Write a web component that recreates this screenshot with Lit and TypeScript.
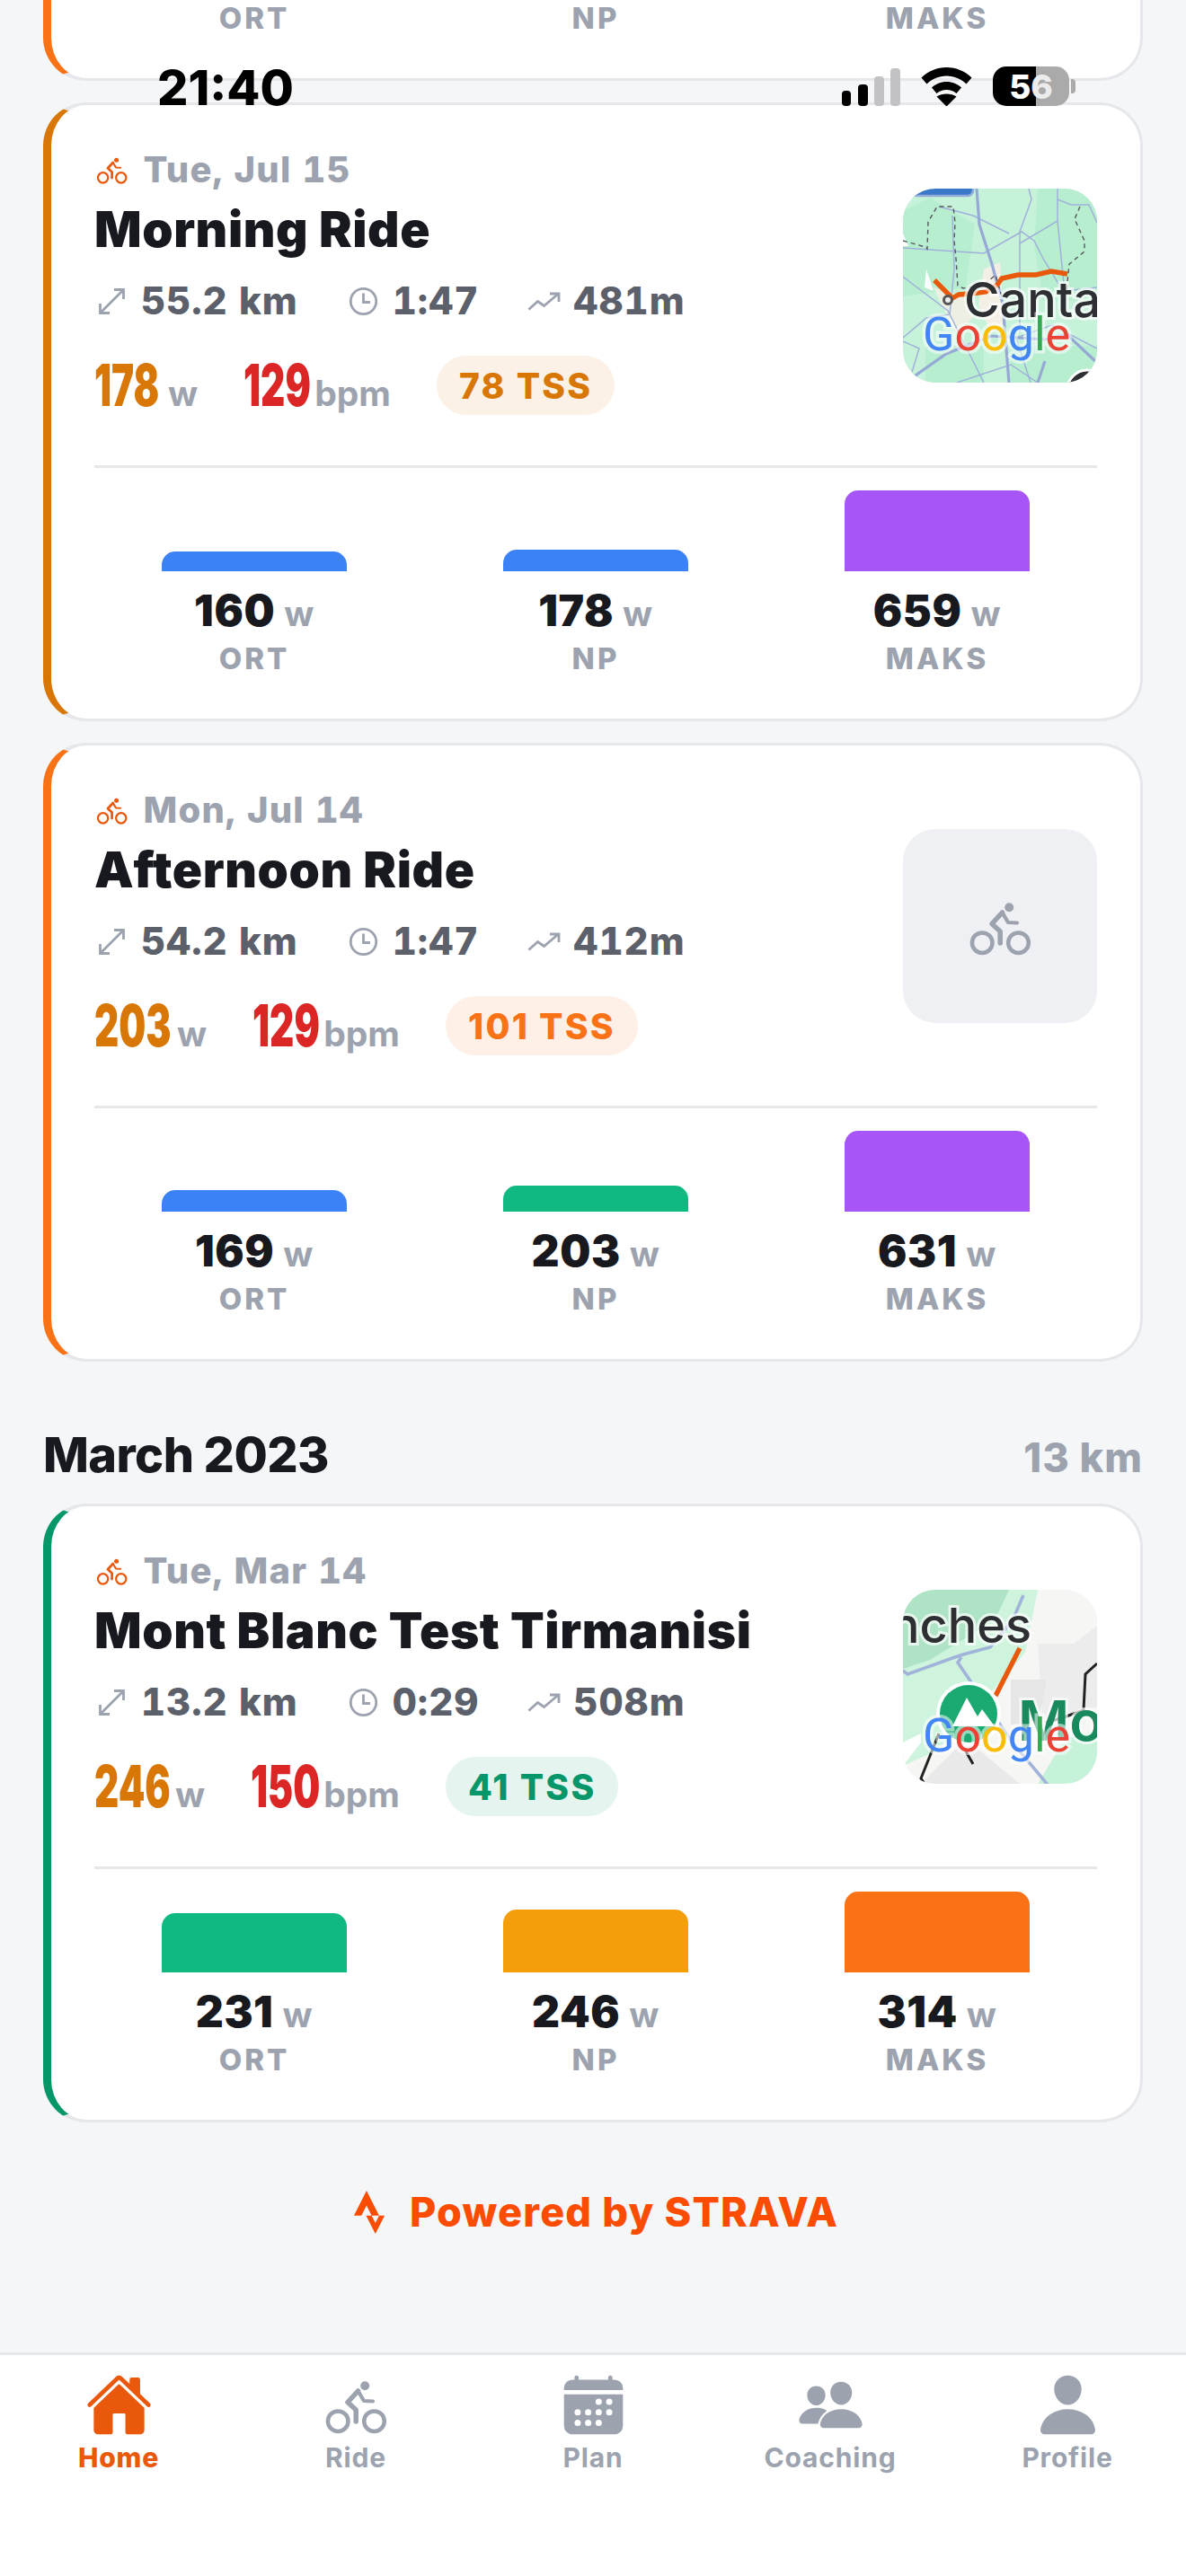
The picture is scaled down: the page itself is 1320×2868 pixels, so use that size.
import { LitElement, html, css, svg } from "lit";
import { customElement } from "lit/decorators.js";

const ION = {
  home: svg`<path d="M261.56 101.28a8 8 0 00-11.06 0L66.4 277.15a8 8 0 00-2.47 5.79L63.9 448a32 32 0 0032 32H192a16 16 0 0016-16V328a8 8 0 018-8h80a8 8 0 018 8v136a16 16 0 0016 16h96.06a32 32 0 0032-32V282.94a8 8 0 00-2.47-5.79z"/><path d="M490.91 244.15l-74.8-71.56V64a16 16 0 00-16-16h-48a16 16 0 00-16 16v32l-57.92-55.38C272.77 35.14 264.71 32 256 32c-8.68 0-16.72 3.14-22.14 8.63l-212.7 203.5c-6.22 6-7 15.87-1.34 22.37A16 16 0 0043 267.56L250.5 69.28a8 8 0 0111.06 0l207.52 198.28a16 16 0 0022.59-.44c6.14-6.36 5.63-16.86-.76-22.97z"/>`,
  calendar: svg`<path d="M480 128a64 64 0 00-64-64h-16V48.45c0-8.61-6.62-16-15.23-16.43A16 16 0 00368 48v16H144V48.45c0-8.61-6.62-16-15.23-16.43A16 16 0 00112 48v16H96a64 64 0 00-64 64v12a4 4 0 004 4h440a4 4 0 004-4zM32 416a64 64 0 0064 64h320a64 64 0 0064-64V179a3 3 0 00-3-3H35a3 3 0 00-3 3zm344-208a24 24 0 11-24 24 24 24 0 0124-24zm0 80a24 24 0 11-24 24 24 24 0 0124-24zm-80-80a24 24 0 11-24 24 24 24 0 0124-24zm0 80a24 24 0 11-24 24 24 24 0 0124-24zm0 80a24 24 0 11-24 24 24 24 0 0124-24zm-80-80a24 24 0 11-24 24 24 24 0 0124-24zm0 80a24 24 0 11-24 24 24 24 0 0124-24zm-80-80a24 24 0 11-24 24 24 24 0 0124-24zm0 80a24 24 0 11-24 24 24 24 0 0124-24z"/>`,
  people: svg`<path d="M336 256c-20.56 0-40.44-9.18-56-25.84-15.13-16.25-24.37-37.92-26-61-1.74-24.62 5.77-47.26 21.14-63.76S312 80 336 80c23.83 0 45.38 9.06 60.7 25.52 15.47 16.62 23 39.22 21.26 63.63-1.67 23.11-10.9 44.77-26 61C376.44 246.82 356.57 256 336 256zM467.83 432H204.18a27.71 27.71 0 01-22-10.67 30.22 30.22 0 01-5.26-25.79c8.42-33.81 29.28-61.85 60.32-81.08C264.79 297.4 299.86 288 336 288c36.85 0 71 9 98.71 26.05 31.11 19.13 52 47.33 60.38 81.55a30.27 30.27 0 01-5.32 25.76A27.68 27.68 0 01467.83 432zM147 260c-35.19 0-66.13-32.72-69-72.93-1.42-20.6 5-39.65 18-53.62 12.86-13.83 31-21.45 51-21.45s38 7.66 50.93 21.57c13.1 14.08 19.5 33.09 18 53.52-2.87 40.2-33.8 72.91-68.93 72.91zM212.66 291.45c-17.59-8.6-40.42-12.9-65.65-12.9-29.46 0-58.07 7.68-80.57 21.62-25.51 15.83-42.67 38.88-49.6 66.71a27.39 27.39 0 005.36 23.65A25.62 25.62 0 0043.33 400h111a8 8 0 007.87-6.57c.11-.63.25-1.26.41-1.88 8.48-34.06 28.35-62.84 57.71-83.82a8 8 0 00-.63-13.39c-1.57-.92-3.37-1.89-6.03-2.89z"/>`,
  person: svg`<path d="M332.64 64.58C313.18 43.57 286 32 256 32c-30.16 0-57.43 11.5-76.8 32.38-19.58 21.11-29.12 49.8-26.88 80.78C156.76 206.28 203.27 256 256 256s99.16-49.71 103.67-110.82c2.27-30.7-7.33-59.33-27.03-80.6zM432 480H80a31 31 0 01-24.2-11.13c-6.5-7.77-9.12-18.38-7.18-29.11C57.06 392.94 83.4 353.61 124.8 326c36.78-24.51 83.37-38 131.2-38s94.42 13.5 131.2 38c41.4 27.6 67.74 66.93 76.18 113.75 1.94 10.73-.68 21.34-7.18 29.11A31 31 0 01432 480z"/>`,
};

/* Rider icon: thin wheels, round joints; viewBox is a 75-unit square centred on the drawing. */
const rider = () => html`<svg class="rider" viewBox="35.5 12 75 75">
  <circle class="wheel" cx="52.7" cy="67.7" r="11.3"/><circle class="wheel" cx="93" cy="67.7" r="11.3"/>
  <circle class="skull" cx="82.7" cy="28.3" r="5"/>
  <path class="limb torso" d="M75 34L63.500 46.500L72.700 55V68"/>
  <path class="limb arm" d="M75 34L81.500 45L91.500 45.500"/>
</svg>`;

const googleWord = svg`<text class="google" x="22" y="180"><tspan fill="#4285f4">G</tspan><tspan fill="#ea4335">o</tspan><tspan fill="#fbbc05">o</tspan><tspan fill="#4285f4">g</tspan><tspan fill="#34a853">l</tspan><tspan fill="#ea4335">e</tspan></text>`;

const mapOne = html`<svg class="map" viewBox="0 0 216 216">
  <rect width="216" height="216" fill="#c6f2da"/>
  <path d="M0 25l30-15 50 30-10 70-70 10zM150 0h66v125h-60l-10-60zM120 175h96v41h-96zM25 175h65v41H25z" fill="#b8eed0"/>
  <path d="M90 90l18-8 4 70-14 8-14-30z" fill="#f4efe4"/>
  <path d="M34 110l24 50 20-16-10-24z" fill="#f4efe4" opacity=".85"/>
  <path d="M26 90l8 24-10-4zM0 50l6 14H0z" fill="#fff"/>
  <g fill="none" stroke="#9fb1da" stroke-width="1.5">
    <path d="M0 66l90 6 42-24 14 10 10 20 22 36 38-4"/><path d="M0 98l50 38 40 80"/><path d="M130 48V160"/>
    <path d="M140 0l3 12-13 36"/><path d="M172 0v36l-42 25"/><path d="M172 12l15 6h20l9 20"/>
    <path d="M172 36l8 80"/><path d="M0 170l18 8-8 26"/><path d="M216 178l-50-26-40 14 16 50"/>
    <path d="M60 216l60-20 30 20"/><path d="M40 20l38 10 40 20"/><path d="M55 30l2 60-5 50-26 4-26 22"/>
  </g>
  <path d="M82 0l3 40 14 44 12 44 7 88M12 216l2-8 34-24 50-20 60 4 24-6 32 30M150 216l8-24" fill="none" stroke="#96a9d5" stroke-width="3.2"/>
  <rect x="8" y="-12" width="70" height="20" rx="6" fill="#3a78c9" stroke="#93abd8" stroke-width="2.5"/>
  <g fill="none" stroke="#55595f" stroke-width="1.4" stroke-dasharray="5 4">
    <path d="M0 58l25 7 2 2 1-30 10-17h18l2 18-1 20 2 20 2 30 6 3 22-3 14-12 8 28"/>
    <path d="M197 20l-6 14 11 24 0 12-17 14-3 30"/>
  </g>
  <path d="M35 102l15 15 5 5 7-4 13-1 17-2 13-8 5-7 18-4 20 0 17-4 18 3" fill="none" stroke="#e8590c" stroke-width="5.4"/>
  <circle cx="50" cy="124" r="4.500" fill="#eee" stroke="#555" stroke-width="3"/>
  <text class="place" x="68" y="143">Canta</text>
  ${googleWord}
  <circle cx="205" cy="224" r="22" fill="#2d2f33" stroke="#fff" stroke-width="3"/>
</svg>`;

const mapTwo = html`<svg class="map" viewBox="0 0 216 216">
  <rect width="216" height="216" fill="#f6f6f4"/>
  <path d="M0 0h150l-14 70-60 70-40 40L0 196z" fill="#cff4de"/>
  <path d="M0 0h118l-16 34-72 44-30 10z" fill="#aee3c6"/>
  <path d="M150 216l30-50 36-10v60z" fill="#c6f2da"/>
  <path d="M0 170l20-10v10L0 196z" fill="#fff"/>
  <path d="M20 216l50-50 60 50z" fill="#e9e9e9"/>
  <path d="M150 60l40 0 26-20v90l-60 20z" fill="#ececec"/>
  <path d="M120 100l40 0-10 50-30 0z" fill="#e6e6e6"/>
  <path d="M0 90l5 4 50-18 12-4 30-8 25-30 12-28M65 75l-4 6 60 88 50 60" fill="none" stroke="#a2b3da" stroke-width="3.6"/>
  <path d="M103 118l27-53" fill="none" stroke="#e8590c" stroke-width="5.4"/>
  <path d="M216 82l-13 12-2 40-22 8-20 6M40 160l-20 50 4 6M70 180l8 14" fill="none" stroke="#222" stroke-width="3"/>
  <text class="place" x="143" y="59" text-anchor="end">nches</text>
  <circle cx="73" cy="138" r="36" fill="#fff"/>
  <circle cx="73" cy="138" r="32" fill="#1aa971"/>
  <path d="M55 152l16-32 12 21 5-8 14 19z" fill="#fff"/>
  <text class="peak" x="128" y="168">Mo</text>
  ${googleWord}
</svg>`;

interface Bar { v: number; c: string; l: string }
interface Ride {
  date: string; title: string; km: string; time: string; up: string;
  w: string; ww: number; bpm: string; bw: number; tss: string; tc: string; tb: string;
  accent: string; thumb: unknown; bars: Bar[];
}

const B = "#3b82f6", G = "#10b981", A = "#f59e0b", O = "#f97316", P = "#a855f7";
const bars = (a: number, ac: string, b: number, bc: string, c: number, cc: string): Bar[] => [
  { v: a, c: ac, l: "ORT" }, { v: b, c: bc, l: "NP" }, { v: c, c: cc, l: "MAKS" },
];

const RIDES: Ride[] = [
  { date: "Wed, Jul 16", title: "Evening Ride", km: "41.0 km", time: "1:22", up: "301m", w: "171", ww: 72, bpm: "131", bw: 68, tss: "64 TSS", tc: "#f97316", tb: "#fef0e7", accent: "#f97316", thumb: mapOne, bars: bars(152, B, 171, B, 612, P) },
  { date: "Tue, Jul 15", title: "Morning Ride", km: "55.2 km", time: "1:47", up: "481m", w: "178", ww: 71, bpm: "129", bw: 68, tss: "78 TSS", tc: "#d97706", tb: "#fbf1e6", accent: "#d97706", thumb: mapOne, bars: bars(160, B, 178, B, 659, P) },
  { date: "Mon, Jul 14", title: "Afternoon Ride", km: "54.2 km", time: "1:47", up: "412m", w: "203", ww: 81, bpm: "129", bw: 68, tss: "101 TSS", tc: "#f97316", tb: "#fef0e7", accent: "#f97316", thumb: null, bars: bars(169, B, 203, G, 631, P) },
];
const MARCH: Ride[] = [
  { date: "Tue, Mar 14", title: "Mont Blanc Test Tirmanisi", km: "13.2 km", time: "0:29", up: "508m", w: "246", ww: 79, bpm: "150", bw: 70, tss: "41 TSS", tc: "#059669", tb: "#e6f4ef", accent: "#059669", thumb: mapTwo, bars: bars(231, G, 246, A, 314, O) },
];

const TABS = [
  { l: "Home", i: html`<svg viewBox="0 0 512 512">${ION.home}</svg>`, on: true },
  { l: "Ride", i: rider() },
  { l: "Plan", i: html`<svg viewBox="0 0 512 512">${ION.calendar}</svg>` },
  { l: "Coaching", i: html`<svg viewBox="0 0 512 512">${ION.people}</svg>` },
  { l: "Profile", i: html`<svg viewBox="0 0 512 512">${ION.person}</svg>` },
];

@customElement("app-root")
export class AppRoot extends LitElement {
  static styles = css`
    :host { display: block; position: relative; width: 1320px; height: 2868px; overflow: hidden; background: #f5f6f8; font-family: Inter, "Liberation Sans", sans-serif; }
    .page { display: flex; flex-direction: column; height: 2868px; }
    .scroll { flex: 1; min-height: 0; overflow: hidden; padding: 0 48px; }
    .list { display: flex; flex-direction: column; gap: 24px; margin-top: -599px; }
    .card { box-sizing: border-box; height: 689px; background: #fff; border: 3px solid #e5e7eb; border-left-width: 9px; border-radius: 48px; padding: 48px; display: flex; flex-direction: column; }
    .head { display: flex; justify-content: space-between; align-items: center; padding-bottom: 9px; }
    .date { display: flex; align-items: center; gap: 16px; font-size: 40px; line-height: 48px; font-weight: 800; color: #9ca3af; font-variant-numeric: tabular-nums; letter-spacing: 1.2px; }
    .rider { fill: none; stroke: #9ca3af; color: #9ca3af; }
    .wheel { stroke-width: 4.5; }
    .skull { fill: currentColor; stroke: none; }
    .limb { stroke-linejoin: round; stroke-linecap: round; }
    .torso { stroke-width: 5.5; }
    .arm { stroke-width: 4.2; }
    .date .rider { width: 37.5px; height: 37.5px; margin-left: 1px; stroke: #ea580c; color: #ea580c; flex: none; }
    .title { margin-top: 6px; font-size: 55px; line-height: 72px; font-weight: 900; color: #18191f; white-space: nowrap; letter-spacing: 0.6px; }
    .stats { margin-top: 17px; display: flex; gap: 53px; font-size: 42px; line-height: 54px; font-weight: 800; color: #5b606b; font-variant-numeric: tabular-nums; letter-spacing: 1px; }
    .stat { display: flex; align-items: center; gap: 13px; }
    .stat svg { width: 39px; height: 39px; fill: none; stroke: #9ca3af; stroke-width: 2.8; }
    .metrics { margin-top: 34px; display: flex; align-items: center; height: 66px; }
    .metric { display: flex; align-items: baseline; gap: 11px; margin-right: 51px; }
    .big { display: inline-block; height: 66px; font-size: 64px; line-height: 66px; font-weight: 900; }
    .big span { display: inline-block; white-space: nowrap; transform: scaleX(0.66); transform-origin: 0 50%; }
    .unit { font-size: 39px; font-weight: 700; color: #9ca3af; }
    .pill { display: flex; align-items: center; height: 66px; padding: 0 25px; border-radius: 33px; font-size: 39px; font-weight: 800; letter-spacing: 2.3px; }
    .thumb { flex: none; width: 216px; height: 216px; border-radius: 36px; overflow: hidden; background: #eff0f4; display: flex; align-items: center; justify-content: center; margin-top: 9px; }
    .thumb > svg { display: block; }
    .map { width: 216px; height: 216px; }
    .place { font-family: Inter, sans-serif; font-weight: 500; font-size: 54px; fill: #2d2f33; stroke: rgba(255,255,255,.7); stroke-width: 6px; paint-order: stroke; }
    .peak { font-family: Inter, sans-serif; font-weight: 600; font-size: 62px; fill: #188a5e; stroke: rgba(255,255,255,.7); stroke-width: 6px; paint-order: stroke; }
    .google { font-family: Roboto, sans-serif; font-weight: 400; font-size: 52px; stroke: rgba(255,255,255,.55); stroke-width: 7px; paint-order: stroke; }
    .thumb .rider { width: 75px; height: 75px; }
    .rule { height: 3px; background: #e5e7eb; margin-top: 47px; flex: none; }
    .cols { margin-top: 25px; display: grid; grid-template-columns: repeat(3, 1fr); gap: 24px; }
    .col { display: flex; flex-direction: column; align-items: center; }
    .track { height: 90px; width: 58%; display: flex; align-items: flex-end; }
    .bar { width: 100%; border-radius: 15px 15px 0 0; }
    .value { margin-top: 14px; display: flex; align-items: baseline; gap: 10px; font-size: 48px; line-height: 60px; font-weight: 900; color: #18191f; letter-spacing: 0.6px; }
    .value small { font-size: 39px; font-weight: 700; color: #9ca3af; }
    .label { margin-top: -1px; font-size: 33px; line-height: 42px; font-weight: 800; letter-spacing: 3px; color: #9ca3af; }
    .section { display: flex; justify-content: space-between; align-items: baseline; margin-top: 44px; margin-bottom: -6px; }
    .section h2 { margin: 0; font-size: 54px; line-height: 72px; font-weight: 800; color: #18191f; letter-spacing: -0.6px; }
    .section span { font-size: 45px; font-weight: 800; color: #9ca3af; letter-spacing: 1px; }
    .power { margin-top: 49px; display: flex; justify-content: center; align-items: center; gap: 21px; font-size: 45px; line-height: 54px; font-weight: 800; color: #fc4c02; letter-spacing: 1.2px; }
    .power svg { width: 48px; height: 48px; fill: #fc4c02; }
    .tabs { flex: none; height: 249px; box-sizing: border-box; background: #fff; border-top: 3px solid #e5e7eb; display: grid; grid-template-columns: repeat(5, 1fr); padding-top: 18px; }
    .tab { display: flex; flex-direction: column; align-items: center; color: #9ca3af; fill: #9ca3af; font-size: 30px; line-height: 42px; font-weight: 700; letter-spacing: 0.8px; }
    .tab.on { color: #ea580c; fill: #ea580c; font-weight: 800; }
    .tab svg { width: 75px; height: 75px; display: block; }
    .status { position: absolute; left: 0; right: 0; top: 74px; height: 44px; color: #000; }
    .time { position: absolute; left: 175px; top: -6px; font-size: 54px; line-height: 60px; font-weight: 800; }
    .sig { position: absolute; left: 937px; top: 0; width: 150px; height: 44px; }
    .batt { position: absolute; left: 1105px; top: 0; width: 85px; height: 44px; border-radius: 15px; background: linear-gradient(90deg, #000 56%, #aaa 56%); color: #fff; display: flex; align-items: center; justify-content: center; font-size: 37px; font-weight: 800; }
    .batt i { font-style: normal; color: #ececec; }
    .nub { position: absolute; left: 1192px; top: 14px; width: 5px; height: 16px; border-radius: 0 4px 4px 0; background: #aaa; }
  `;

  private card(r: Ride) {
    const max = Math.max(...r.bars.map((b) => b.v));
    return html`<article class="card" style="border-left-color:${r.accent}">
      <div class="head">
        <div>
          <div class="date">${rider()}${r.date}</div>
          <div class="title">${r.title}</div>
          <div class="stats">
            <div class="stat"><svg viewBox="0 0 39 39"><path d="M6.500 32.500l26-26M22 6.500h10.500V17M6.500 22v10.500H17"/></svg>${r.km}</div>
            <div class="stat"><svg viewBox="0 0 39 39"><circle cx="19.500" cy="19.500" r="14.200"/><path d="M19.500 10.500v10h7.500"/></svg>${r.time}</div>
            <div class="stat"><svg viewBox="0 0 39 39"><path d="M2.500 28.500l10-9 7 5 16-13.500M26 11h10v9"/></svg>${r.up}</div>
          </div>
          <div class="metrics">
            <div class="metric"><span class="big" style="width:${r.ww}px;color:#d97706"><span>${r.w}</span></span><span class="unit">w</span></div>
            <div class="metric"><span class="big" style="width:${r.bw}px;color:#dc2626"><span>${r.bpm}</span></span><span class="unit">bpm</span></div>
            <div class="pill" style="color:${r.tc};background:${r.tb}">${r.tss}</div>
          </div>
        </div>
        <div class="thumb">${r.thumb ?? rider()}</div>
      </div>
      <div class="rule"></div>
      <div class="cols">
        ${r.bars.map((b) => html`<div class="col">
          <div class="track"><div class="bar" style="height:${(b.v / max) * 90}px;background:${b.c}"></div></div>
          <div class="value">${b.v}<small>w</small></div>
          <div class="label">${b.l}</div>
        </div>`)}
      </div>
    </article>`;
  }

  render() {
    return html`<div class="page">
      <main class="scroll">
        <div class="list">
          ${RIDES.map((r) => this.card(r))}
          <div class="section"><h2>March 2023</h2><span>13 km</span></div>
          ${MARCH.map((r) => this.card(r))}
          <div class="power"><svg viewBox="0 0 24 24"><path d="M15.387 17.944l-2.089-4.116h-3.065L15.387 24l5.150-10.172h-3.066m-7.008-5.599l2.836 5.598h4.172L10.463 0l-7 13.828h4.169"/></svg>Powered by STRAVA</div>
        </div>
      </main>
      <nav class="tabs">
        ${TABS.map((t) => html`<div class="tab ${t.on ? "on" : ""}">${t.i}${t.l}</div>`)}
      </nav>
    </div>
    <div class="status">
      <div class="time">21:40</div>
      <svg class="sig" viewBox="0 0 150 44">
        <rect x="0" y="27" width="10" height="17" rx="4"/><rect x="18" y="20" width="11" height="24" rx="4"/>
        <rect x="36" y="11" width="11" height="33" rx="4" fill="#c2c2c4"/><rect x="54" y="2" width="11" height="42" rx="4" fill="#c2c2c4"/>
        <path d="M116.500 1c-11 0-21 4.500-28 11.500l6 7c5.500-5.500 13.500-9 22-9s16.500 3.500 22 9l6-7C137.500 5.500 127.500 1 116.500 1zM116.500 17c-6.500 0-12 2.500-16.500 6.500l5.500 6.500c3-2.500 7-4 11-4s8 1.500 11 4l5.500-6.500C128.500 19.500 123 17 116.500 17zM105.500 33.500l11 11 11-11c-3-2-7-3-11-3s-8 1-11 3z"/>
      </svg>
      <div class="batt">5<i>6</i></div>
      <div class="nub"></div>
    </div>`;
  }
}
